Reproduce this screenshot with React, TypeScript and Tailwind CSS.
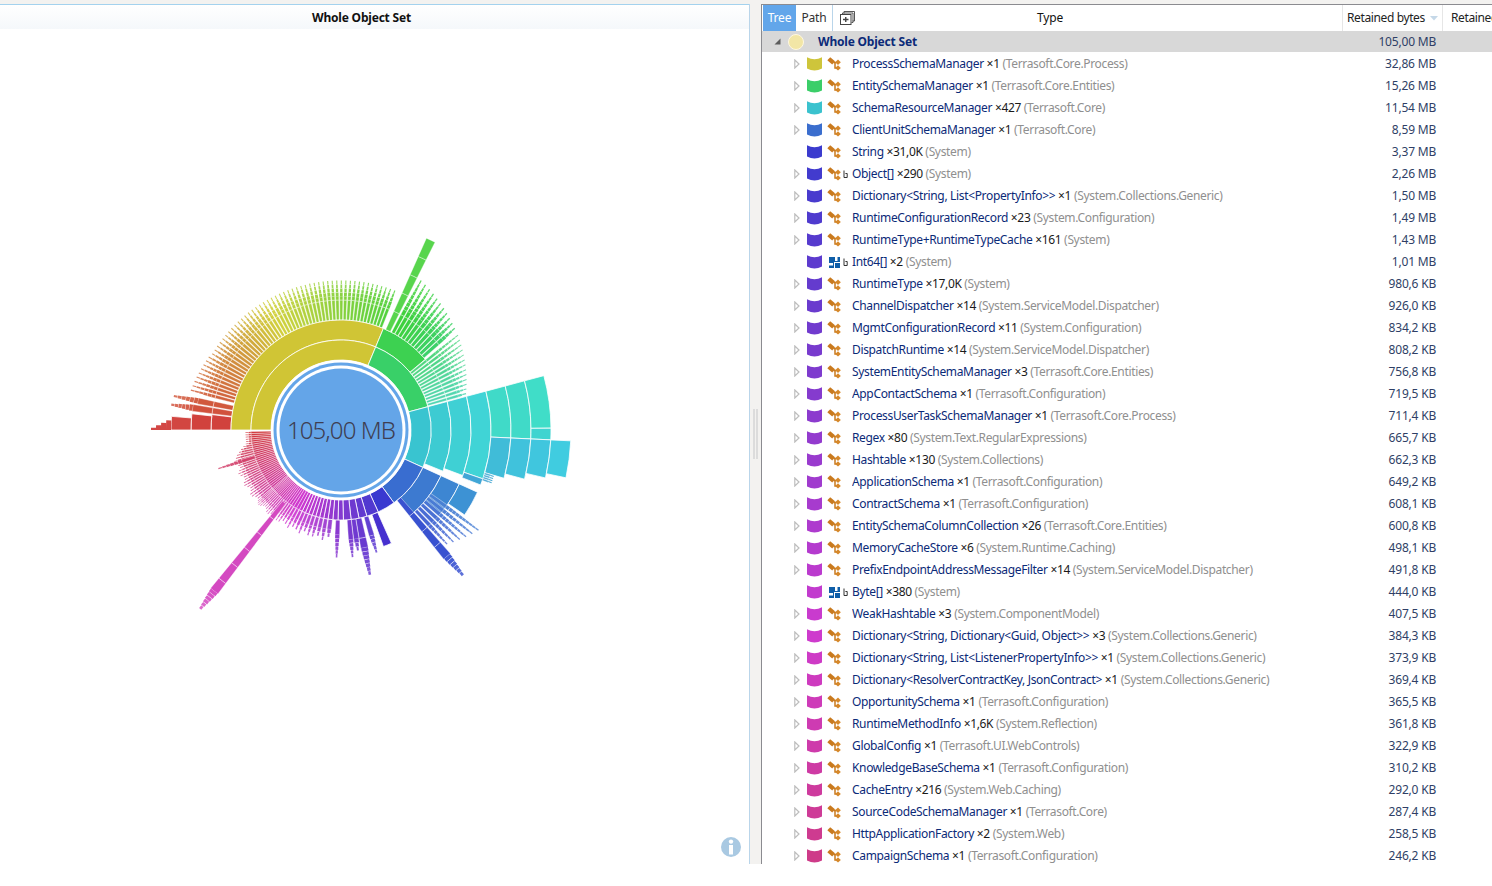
import type { ReactNode } from 'react'

interface Row {
  name: string
  count: string
  ns: string
  size: string
  mb: number
  icon?: 'class' | 'array' | 'classRef'
  leaf?: boolean
}

const rows: Row[] = [
  { name: 'ProcessSchemaManager', count: '×1', ns: 'Terrasoft.Core.Process', size: '32,86 MB', mb: 32.86 },
  { name: 'EntitySchemaManager', count: '×1', ns: 'Terrasoft.Core.Entities', size: '15,26 MB', mb: 15.26 },
  { name: 'SchemaResourceManager', count: '×427', ns: 'Terrasoft.Core', size: '11,54 MB', mb: 11.54 },
  { name: 'ClientUnitSchemaManager', count: '×1', ns: 'Terrasoft.Core', size: '8,59 MB', mb: 8.59 },
  { name: 'String', count: '×31,0K', ns: 'System', size: '3,37 MB', mb: 3.37, leaf: true },
  { name: 'Object[]', count: '×290', ns: 'System', size: '2,26 MB', mb: 2.26, icon: 'classRef' },
  { name: 'Dictionary<String, List<PropertyInfo>>', count: '×1', ns: 'System.Collections.Generic', size: '1,50 MB', mb: 1.5 },
  { name: 'RuntimeConfigurationRecord', count: '×23', ns: 'System.Configuration', size: '1,49 MB', mb: 1.49 },
  { name: 'RuntimeType+RuntimeTypeCache', count: '×161', ns: 'System', size: '1,43 MB', mb: 1.43 },
  { name: 'Int64[]', count: '×2', ns: 'System', size: '1,01 MB', mb: 1.01, icon: 'array', leaf: true },
  { name: 'RuntimeType', count: '×17,0K', ns: 'System', size: '980,6 KB', mb: 0.96 },
  { name: 'ChannelDispatcher', count: '×14', ns: 'System.ServiceModel.Dispatcher', size: '926,0 KB', mb: 0.9 },
  { name: 'MgmtConfigurationRecord', count: '×11', ns: 'System.Configuration', size: '834,2 KB', mb: 0.81 },
  { name: 'DispatchRuntime', count: '×14', ns: 'System.ServiceModel.Dispatcher', size: '808,2 KB', mb: 0.79 },
  { name: 'SystemEntitySchemaManager', count: '×3', ns: 'Terrasoft.Core.Entities', size: '756,8 KB', mb: 0.74 },
  { name: 'AppContactSchema', count: '×1', ns: 'Terrasoft.Configuration', size: '719,5 KB', mb: 0.7 },
  { name: 'ProcessUserTaskSchemaManager', count: '×1', ns: 'Terrasoft.Core.Process', size: '711,4 KB', mb: 0.69 },
  { name: 'Regex', count: '×80', ns: 'System.Text.RegularExpressions', size: '665,7 KB', mb: 0.65 },
  { name: 'Hashtable', count: '×130', ns: 'System.Collections', size: '662,3 KB', mb: 0.65 },
  { name: 'ApplicationSchema', count: '×1', ns: 'Terrasoft.Configuration', size: '649,2 KB', mb: 0.63 },
  { name: 'ContractSchema', count: '×1', ns: 'Terrasoft.Configuration', size: '608,1 KB', mb: 0.59 },
  { name: 'EntitySchemaColumnCollection', count: '×26', ns: 'Terrasoft.Core.Entities', size: '600,8 KB', mb: 0.59 },
  { name: 'MemoryCacheStore', count: '×6', ns: 'System.Runtime.Caching', size: '498,1 KB', mb: 0.49 },
  { name: 'PrefixEndpointAddressMessageFilter', count: '×14', ns: 'System.ServiceModel.Dispatcher', size: '491,8 KB', mb: 0.48 },
  { name: 'Byte[]', count: '×380', ns: 'System', size: '444,0 KB', mb: 0.43, icon: 'array', leaf: true },
  { name: 'WeakHashtable', count: '×3', ns: 'System.ComponentModel', size: '407,5 KB', mb: 0.4 },
  { name: 'Dictionary<String, Dictionary<Guid, Object>>', count: '×3', ns: 'System.Collections.Generic', size: '384,3 KB', mb: 0.38 },
  { name: 'Dictionary<String, List<ListenerPropertyInfo>>', count: '×1', ns: 'System.Collections.Generic', size: '373,9 KB', mb: 0.37 },
  { name: 'Dictionary<ResolverContractKey, JsonContract>', count: '×1', ns: 'System.Collections.Generic', size: '369,4 KB', mb: 0.36 },
  { name: 'OpportunitySchema', count: '×1', ns: 'Terrasoft.Configuration', size: '365,5 KB', mb: 0.36 },
  { name: 'RuntimeMethodInfo', count: '×1,6K', ns: 'System.Reflection', size: '361,8 KB', mb: 0.35 },
  { name: 'GlobalConfig', count: '×1', ns: 'Terrasoft.UI.WebControls', size: '322,9 KB', mb: 0.32 },
  { name: 'KnowledgeBaseSchema', count: '×1', ns: 'Terrasoft.Configuration', size: '310,2 KB', mb: 0.3 },
  { name: 'CacheEntry', count: '×216', ns: 'System.Web.Caching', size: '292,0 KB', mb: 0.29 },
  { name: 'SourceCodeSchemaManager', count: '×1', ns: 'Terrasoft.Core', size: '287,4 KB', mb: 0.28 },
  { name: 'HttpApplicationFactory', count: '×2', ns: 'System.Web', size: '258,5 KB', mb: 0.25 },
  { name: 'CampaignSchema', count: '×1', ns: 'Terrasoft.Configuration', size: '246,2 KB', mb: 0.24 },
]

const CX = 341
const CY = 430

// sweep starts at 9 o'clock, the hue follows the angle
const hueAt = (a: number) => (a - 270 + 720) % 360
const color = (a: number, l = 52, s = 62) => `hsl(${hueAt(a)}, ${s}%, ${l}%)`

function polar(r: number, a: number) {
  const t = ((a - 90) * Math.PI) / 180
  return `${(CX + r * Math.cos(t)).toFixed(2)} ${(CY + r * Math.sin(t)).toFixed(2)}`
}

function arc(r0: number, r1: number, a0: number, a1: number) {
  const big = a1 - a0 > 180 ? 1 : 0
  return `M${polar(r0, a0)} A${r0} ${r0} 0 ${big} 1 ${polar(r0, a1)} L${polar(r1, a1)} A${r1} ${r1} 0 ${big} 0 ${polar(r1, a0)} Z`
}

function Cell({ r0, r1, a0, a1, fill, sw = 0.8 }: { r0: number; r1: number; a0: number; a1: number; fill: string; sw?: number }) {
  return <path d={arc(r0, r1, a0, a1)} fill={fill} stroke="#ffffff" strokeWidth={sw} />
}

// one radial spike: full width up to `solid`, stepped taper out to `tip`
function Spike({ a, w, r0, solid, tip, l = 54 }: { a: number; w: number; r0: number; solid: number; tip: number; l?: number }) {
  const cells: ReactNode[] = []
  let r = r0
  let i = 0
  while (r < solid) {
    const next = Math.min(r + 20, solid)
    cells.push(<Cell key={i++} r0={r} r1={next} a0={a - w / 2} a1={a + w / 2} fill={color(a, l)} sw={0.4} />)
    r = next
  }
  if (tip > solid) {
    const steps = Math.max(1, Math.round((tip - solid) / 4))
    const len = (tip - solid) / steps
    for (let s = 0; s < steps; s++) {
      const k = 1 - (s + 0.5) / steps
      const half = (w / 2) * (0.22 + k * 0.72)
      cells.push(<path key={i++} d={arc(r, r + len - 0.4, a - half, a + half)} fill={color(a, l + 2 + (s * 8) / steps)} stroke="none" />)
      r += len
    }
  }
  return <g>{cells}</g>
}

function fan(from: number, to: number, step: number, r0: number, solid: (a: number) => number, tip: (a: number) => number, l = 54, ratio = 0.8) {
  const out: ReactNode[] = []
  for (let a = from + step / 2; a < to; a += step) {
    out.push(<Spike key={`${from}-${a}`} a={a} w={step * ratio} r0={r0} solid={solid(a)} tip={tip(a)} l={l} />)
  }
  return out
}

function tailTip(a: number) {
  if (a > 255) return 110 - (a - 255) * 2
  return 110 + 2 * Math.sin(a)
}

function Sunburst() {
  // first ring takes its slices from the row sizes, then a run of small ones up to 9 o'clock
  const slices: { a0: number; a1: number }[] = []
  let a = 270
  rows.forEach((x) => {
    const a1 = a + (x.mb * 360) / 105
    slices.push({ a0: a, a1 })
    a = a1
  })
  while (a < 270 + 358) {
    slices.push({ a0: a, a1: a + 1.35 })
    a += 1.35
  }
  const yellowEnd = slices[0].a1
  const greenEnd = slices[1].a1
  const tealEnd = slices[2].a1

  const tail = slices.slice(6).filter((s) => (s.a0 + s.a1) / 2 - 360 > 184)

  return (
    <svg width="750" height="835" viewBox="0 29 750 835" className="block">
      {/* yellow fan, red end first */}
      {fan(284, 382, 1.75, 110, () => 134, (t) => (t < 300 ? 156 - (t - 284) * 0.3 : 150), 53, 0.8)}
      <Cell r0={110} r1={130} a0={270} a1={276.8} fill={color(272, 53)} />
      <Cell r0={130} r1={150} a0={270} a1={276.2} fill={color(272, 53)} />
      <Cell r0={150} r1={170} a0={270} a1={274.6} fill={color(272, 54)} />
      {[3.2, 2.3, 1.5, 0.7].map((d, i) => (
        <path key={i} d={arc(170 + i * 5, 175 + i * 5, 270, 270 + d)} fill={color(271, 55)} />
      ))}
      <Spike a={278.5} w={2.6} r0={110} solid={150} tip={172} l={53} />
      <Spike a={281.5} w={2.4} r0={110} solid={146} tip={171} l={53} />

      {/* yellow */}
      <Cell r0={90} r1={110} a0={270} a1={yellowEnd} fill={color(326, 51)} />

      {/* green */}
      <Cell r0={90} r1={110} a0={yellowEnd} a1={50} fill="hsl(128, 62%, 53%)" />
      <Spike a={25.3} w={2.6} r0={110} solid={210} tip={210} l={57} />
      {fan(27.2, 50, 2, 110, () => 136, (t) => 171 - (t - 27) * 0.85, 53, 0.85)}
      {fan(50, 75, 1.9, 90, () => 122, (t) => 152 - (t - 50) * 0.9, 58, 0.72)}

      {/* teal */}
      <Cell r0={90} r1={110} a0={greenEnd} a1={112} fill="#3dcbd2" />
      <Cell r0={110} r1={130} a0={greenEnd} a1={110.5} fill="#3fd0d4" />
      <Cell r0={130} r1={150} a0={greenEnd} a1={109} fill="#40d4d6" />
      <Cell r0={130} r1={150} a0={109} a1={111.5} fill="#40a6d6" />
      <Cell r0={150} r1={170} a0={75} a1={92.7} fill="#40dac8" />
      <Cell r0={170} r1={190} a0={75} a1={92.7} fill="#40dac8" />
      <Cell r0={190} r1={210} a0={75} a1={89.5} fill="#40ddc8" />
      <Cell r0={190} r1={210} a0={89.5} a1={92.7} fill="#40d4d0" />
      <Cell r0={150} r1={170} a0={92.7} a1={106.5} fill="#40bcd8" />
      <Cell r0={170} r1={190} a0={92.7} a1={105} fill="#40c2dc" />
      <Cell r0={190} r1={210} a0={92.7} a1={103.2} fill="#40c6de" />
      <Cell r0={210} r1={230} a0={92.7} a1={102} fill="#40cce0" />
      {fan(106.5, 109.5, 0.8, 150, () => 156, () => 160, 55)}

      {/* blue */}
      <Cell r0={90} r1={110} a0={tealEnd} a1={slices[3].a1 - 4} fill="#3d7ad0" />
      <Cell r0={110} r1={130} a0={tealEnd} a1={130} fill="#3d86d2" />
      <Cell r0={130} r1={150} a0={114.5} a1={124.5} fill="#3d92d4" />
      {fan(125, 138, 2.2, 110, () => 130, (t) => 172 - (t - 125) * 1.3, 56)}
      <Spike a={140} w={3} r0={90} solid={165} tip={190} l={52} />

      {/* Object[] and the purple spikes */}
      <Cell r0={90} r1={124} a0={156} a1={160} fill={color(158, 50)} />
      <Spike a={163.8} w={2.8} r0={90} solid={110} tip={128} l={54} />
      <Spike a={168.7} w={3.6} r0={90} solid={120} tip={148} l={52} />
      <Spike a={172} w={2.8} r0={90} solid={110} tip={122} l={52} />
      <Spike a={174.8} w={2.6} r0={90} solid={110} tip={128} l={52} />
      <Spike a={182} w={2.6} r0={90} solid={105} tip={128} l={52} />

      {/* tail fan follows the first ring */}
      {tail.map((s, i) => {
        const mid = (s.a0 + s.a1) / 2 - 360
        const tip = tailTip(mid)
        return <Spike key={i} a={mid} w={(s.a1 - s.a0) * 0.82} r0={90} solid={Math.min(100, tip - 6)} tip={tip} l={55} />
      })}
      <Spike a={218.2} w={2.6} r0={92} solid={205} tip={228} l={56} />
      <Spike a={252.5} w={2} r0={90} solid={104} tip={129} l={54} />

      {/* first ring */}
      {slices.map((s, i) => (
        <Cell
          key={i}
          r0={70}
          r1={90}
          a0={s.a0}
          a1={s.a1}
          fill={i === 0 ? color(326, 51) : color((s.a0 + s.a1) / 2, 52)}
          sw={i < 20 ? 0.8 : 0.4}
        />
      ))}

      <circle cx={CX} cy={CY} r="70" fill="#ffffff" />
      <circle cx={CX} cy={CY} r="67.5" fill="#64a5e8" />
      <circle cx={CX} cy={CY} r="64.5" fill="#ffffff" />
      <circle cx={CX} cy={CY} r="61.5" fill="#64a5e8" />
      <text x={CX} y={CY + 9} textAnchor="middle" fill="#3e3e52" className="font-['Noto_Sans'] text-[24px] font-light tracking-[-0.9px]">
        105,00 MB
      </text>
    </svg>
  )
}

function ClassIcon() {
  return (
    <svg width="14" height="14" viewBox="0 0 14 14" className="shrink-0">
      <path d="M3.2 0.3 L8 4.3 L5.2 7.4 L0.3 3.2 Z" fill="#c97a1e" />
      <path d="M6.5 5.5 H9.5 M8 5.5 V11 H10.5" fill="none" stroke="#c97a1e" strokeWidth="1.5" />
      <path d="M11 2.5 L13.8 5.2 L11 7.9 L8.2 5.2 Z" fill="#d6882a" />
      <path d="M11 8.2 L13.8 10.9 L11 13.6 L8.2 10.9 Z" fill="#d6882a" />
    </svg>
  )
}

function ArrayIcon() {
  return (
    <svg width="11" height="11" viewBox="0 0 11 11" className="shrink-0">
      <rect width="11" height="11" fill="#0f5ea8" />
      <rect x="6" y="0" width="2.5" height="4" fill="#ffffff" />
      <rect x="0" y="6" width="4" height="2.5" fill="#ffffff" />
      <rect x="5" y="5" width="1" height="6" fill="#ffffff" />
      <rect x="5" y="5" width="6" height="1" fill="#ffffff" />
    </svg>
  )
}

function RefMark() {
  return (
    <svg width="5" height="9" viewBox="0 0 5 9" className="shrink-0">
      <path d="M1 0.5 V7.5 H4.2 V3.5 H2.4" fill="none" stroke="#333333" strokeWidth="1" />
    </svg>
  )
}

function Barrel({ fill }: { fill: string }) {
  return (
    <svg width="15" height="14" viewBox="0 0 15 14" className="shrink-0">
      <path d="M0 0.3 Q7.5 4 15 0.3 V11.5 Q7.5 15.4 0 11.5 Z" fill={fill} />
    </svg>
  )
}

function Expander({ open }: { open?: boolean }) {
  if (open) {
    return (
      <svg width="7" height="7" viewBox="0 0 7 7" className="shrink-0">
        <path d="M6.5 0.5 V6.5 H0.5 Z" fill="#5c5c5c" />
      </svg>
    )
  }
  return (
    <svg width="6" height="10" viewBox="0 0 6 10" className="shrink-0">
      <path d="M0.8 1 L5 5 L0.8 9 Z" fill="#ffffff" stroke="#bdbdbd" strokeWidth="1.2" />
    </svg>
  )
}

function TreeRow({ row, index }: { row: Row; index: number }) {
  // first four follow their slice in the chart, the rest walk from indigo to pink
  const before = rows.slice(0, index).reduce((s, x) => s + x.mb, 0)
  const hue = index < 4 ? hueAt(270 + ((before + row.mb / 2) * 360) / 105) : 240 + (index - 4) * 2.75
  const fill = `hsl(${hue}, 60%, 52%)`
  return (
    <div className="flex h-[22px] items-center">
      <div className="flex w-[38px] shrink-0 justify-end">{!row.leaf && <Expander />}</div>
      <div className="ml-[7px]">
        <Barrel fill={fill} />
      </div>
      <div className={`ml-[5px] flex w-[25px] shrink-0 items-center ${row.icon === 'array' ? 'gap-[3px] pl-[2px]' : 'gap-[2px]'}`}>
        {row.icon === 'array' ? <ArrayIcon /> : <ClassIcon />}
        {row.icon && <RefMark />}
      </div>
      <div className="min-w-0 flex-1 truncate tracking-[-0.34px]">
        <span className="text-[#0b2a78]">{row.name}</span>
        <span className="text-[#1a1a1a]"> {row.count} </span>
        <span className="text-[#8f8f8f]">({row.ns})</span>
      </div>
      <div className="w-[112px] shrink-0 pr-[38px] text-right whitespace-nowrap text-[#2f3f66]">{row.size}</div>
      <div className="w-[18px] shrink-0" />
    </div>
  )
}

export default function App() {
  return (
    <div className="flex h-[886px] w-[1492px] flex-col overflow-hidden bg-white font-['Noto_Sans','Open_Sans',sans-serif] text-[12px] tracking-[-0.2px]">
      <div className="h-[4px] shrink-0 bg-[#f3f2f0]" />
      <div className="flex h-[860px] shrink-0">
        {/* Sunburst panel */}
        <div className="relative w-[750px] shrink-0 border-r border-[#b9d5ea] bg-white">
          <div className="flex h-[25px] items-center justify-center border-t border-[#a4d2ee] bg-gradient-to-b from-white to-[#f5f8fb] pt-px pr-[26px] font-bold text-[#111111]">
            Whole Object Set
          </div>
          <Sunburst />
          <svg width="22" height="22" viewBox="0 0 22 22" className="absolute right-[7px] bottom-[6px]">
            <circle cx="11" cy="11" r="10" fill="#a9c9e2" />
            <circle cx="11" cy="5.6" r="2.2" fill="#ffffff" />
            <rect x="9" y="9" width="4" height="9.5" fill="#ffffff" />
          </svg>
        </div>

        {/* Splitter */}
        <div className="flex w-[11px] shrink-0 items-center justify-center gap-px bg-[#f3f2f0]">
          <div className="h-[50px] w-[2px] bg-[#dcdcdc]" />
          <div className="h-[50px] w-[2px] bg-[#dcdcdc]" />
        </div>

        {/* Tree panel */}
        <div className="min-w-0 flex-1 overflow-hidden border-t border-l border-[#8b8b90] bg-white">
          <div className="flex h-[26px] items-stretch bg-white">
            <div className="ml-px flex w-[33px] shrink-0 items-center justify-center bg-[#62a6ea] text-white">Tree</div>
            <div className="flex w-[37px] shrink-0 items-center justify-center border-r border-[#b9d5ea] text-[#333333]">Path</div>
            <div className="flex w-[29px] shrink-0 items-center justify-center">
              <svg width="15" height="14" viewBox="0 0 15 14">
                <path d="M4 2.5 V0.5 H14.5 V10 H12.5 M2.5 3 V2 H13 V11.5 H11.5" fill="none" stroke="#444444" strokeWidth="0.9" />
                <rect x="0.5" y="3.5" width="10.5" height="10" fill="#ffffff" stroke="#444444" />
                <path d="M3 8.5 H8.5 M5.75 6 V11" stroke="#444444" strokeWidth="1.4" />
              </svg>
            </div>
            <div className="flex flex-1 items-center justify-center pr-[104px] text-[#111111]">Type</div>
            <div className="flex w-[100px] shrink-0 items-center border-l border-[#e6e6e6] pl-[4px] tracking-[-0.38px] text-[#222222]">
              Retained bytes
              <svg width="8" height="5" viewBox="0 0 8 5" className="ml-[5px]">
                <path d="M0 0 H8 L4 4.5 Z" fill="#c5d8e8" />
              </svg>
            </div>
            <div className="w-[50px] shrink-0 overflow-hidden border-l border-[#e6e6e6] pl-[8px] leading-[26px] tracking-[-0.38px] whitespace-nowrap text-[#222222]">Retained</div>
          </div>
          <div className="mb-px flex h-[21px] items-center bg-[#d8d8d8]">
            <div className="ml-[12px] flex"><Expander open /></div>
            <span className="ml-[7px] h-[16px] w-[16px] shrink-0 rounded-full border border-[#fff8e0] bg-[#f2e6a6]" />
            <span className="ml-[14px] flex-1 font-bold text-[#0b2a78]">Whole Object Set</span>
            <span className="mr-[56px] text-[#2f3f66]">105,00 MB</span>
          </div>
          {rows.map((row, i) => (
            <TreeRow key={row.name + i} row={row} index={i} />
          ))}
        </div>
      </div>
    </div>
  )
}
